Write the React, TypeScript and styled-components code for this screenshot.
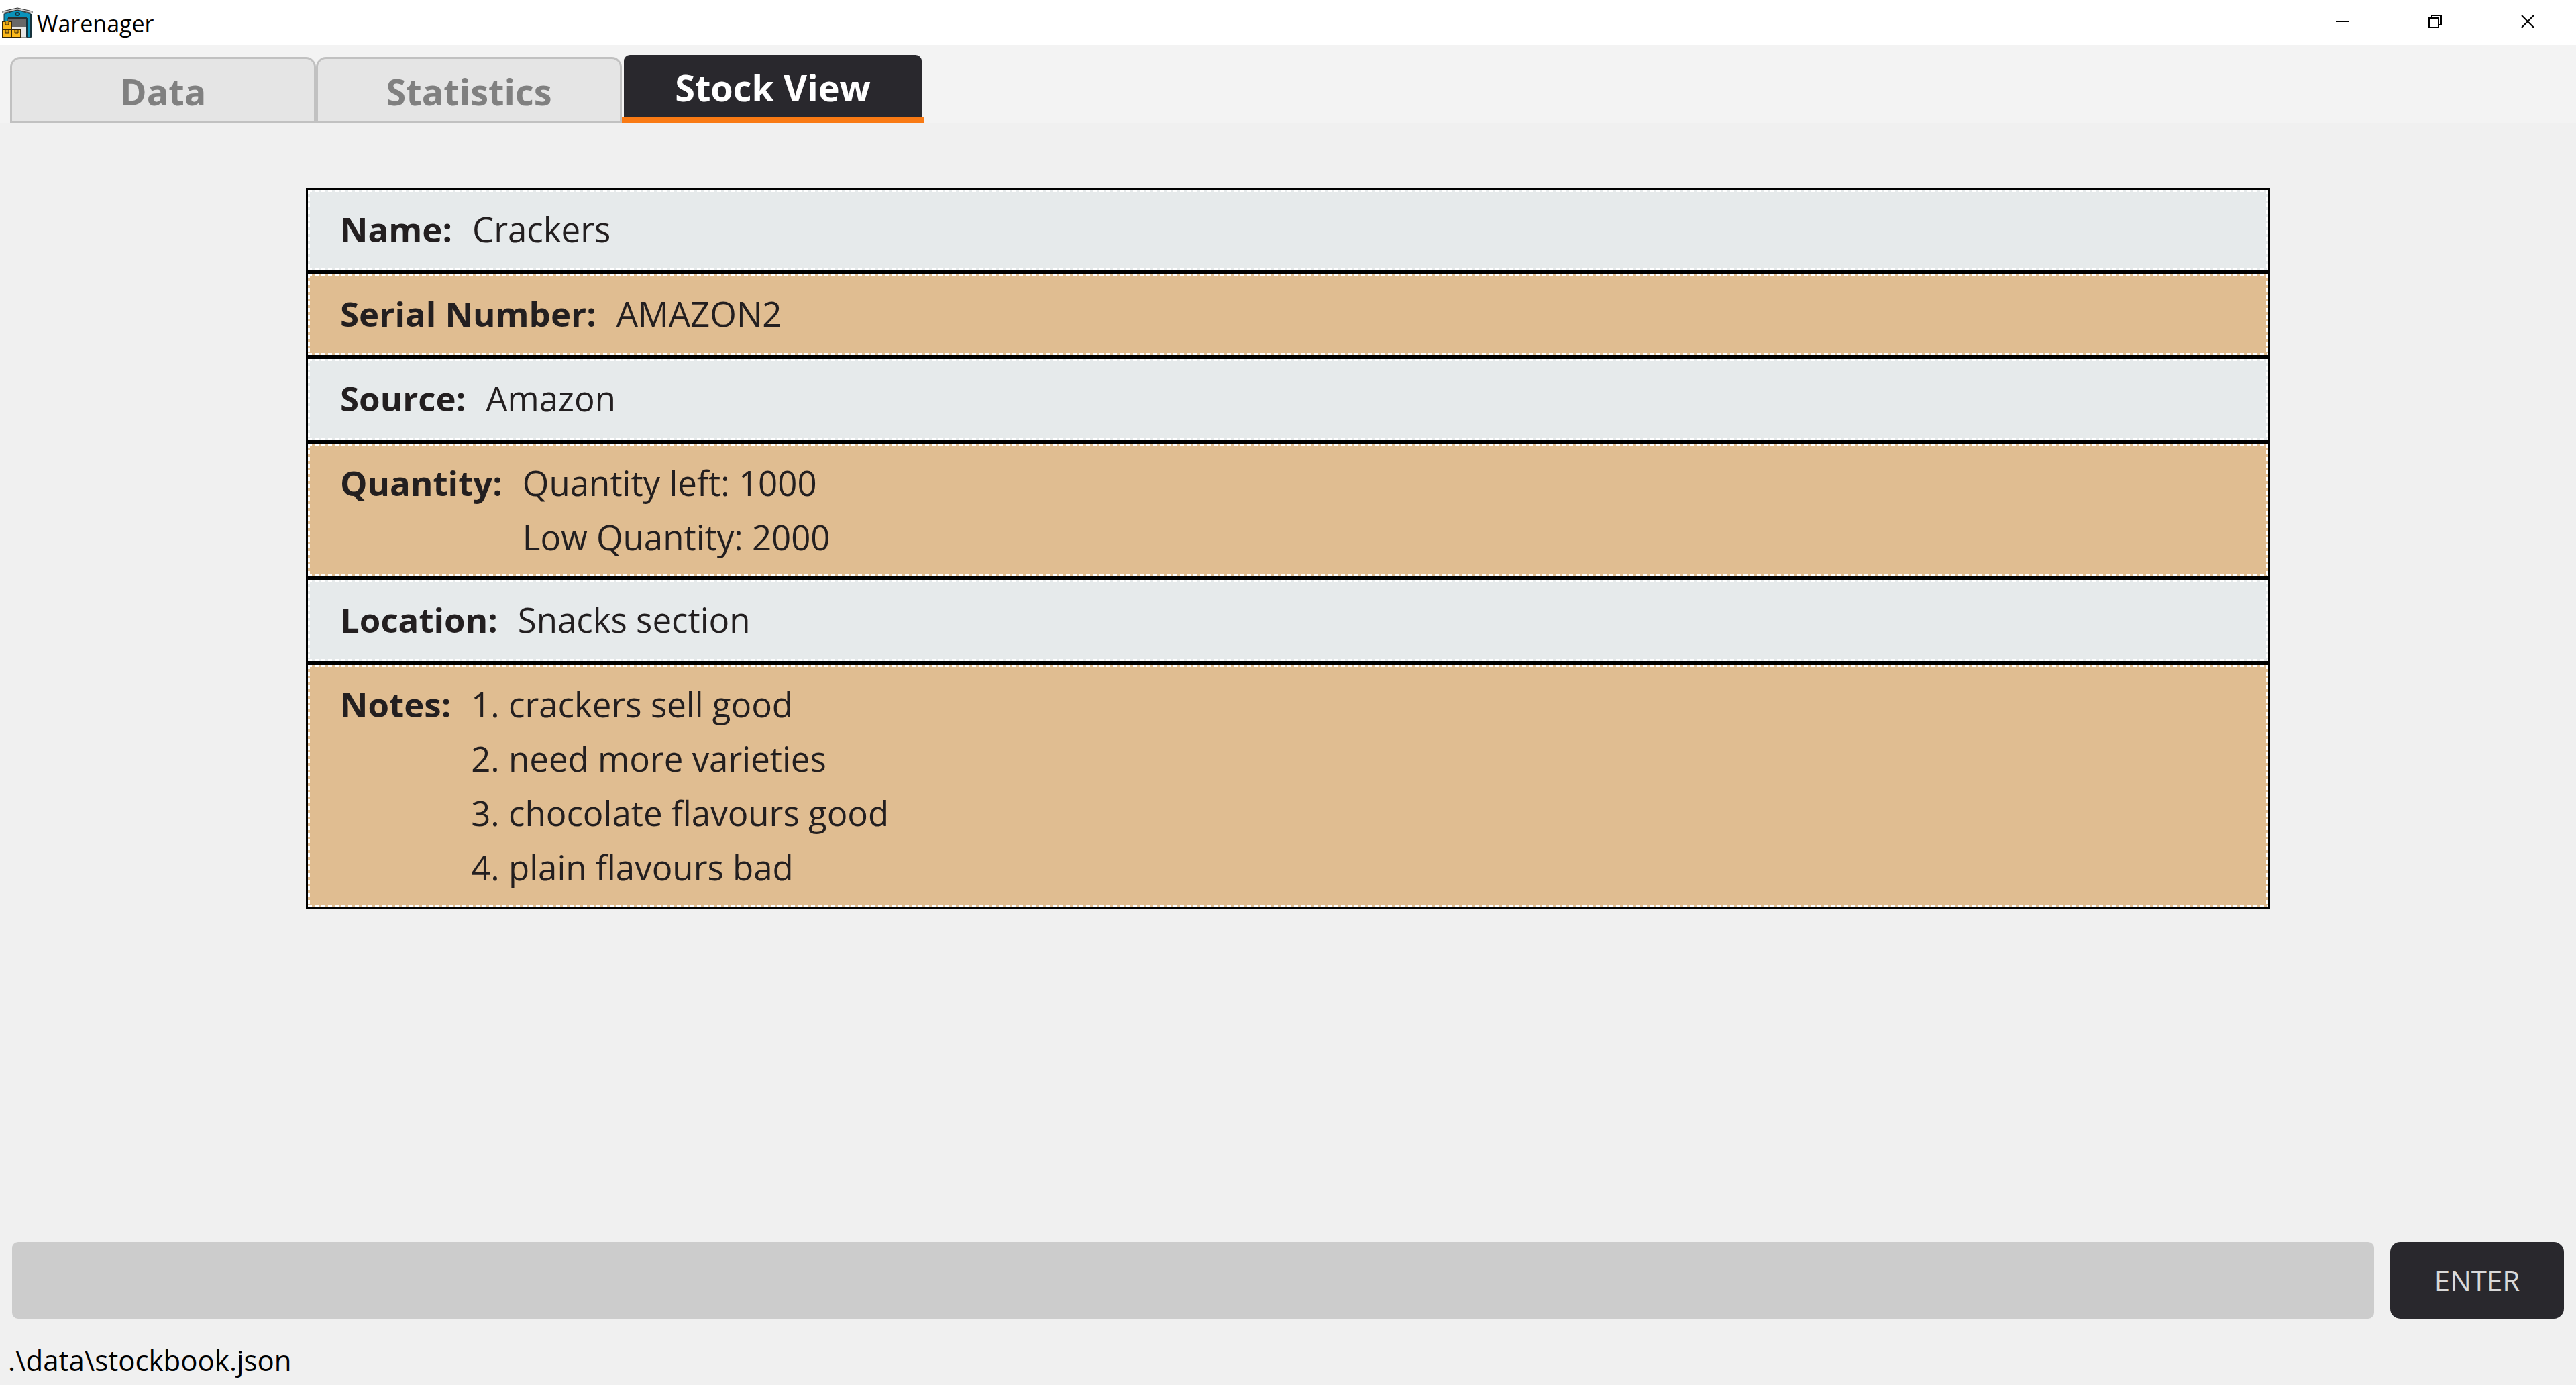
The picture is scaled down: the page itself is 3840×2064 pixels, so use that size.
import { useState, type FormEvent } from "react";
import styled, { createGlobalStyle } from "styled-components";

const colors = {
  title: "#ffffff",
  header: "#f3f3f3",
  page: "#f0f0f0",
  dark: "#29282d",
  accent: "#f97a14",
  tab: "#e5e5e5",
  tabBorder: "#c1c1c1",
  tabText: "#808080",
  pale: "#e6eaeb",
  tan: "#e0bd91",
  text: "#231f20",
  field: "#cccccc",
};

const GlobalStyle = createGlobalStyle`
  *, *::before, *::after { box-sizing: border-box; }
  body {
    margin: 0;
    background: ${colors.page};
    font-family: "Segoe UI", "Open Sans", "Noto Sans", sans-serif;
  }
`;

const Window = styled.div`
  display: flex;
  flex-direction: column;
  min-height: 100vh;
`;

const TitleBar = styled.header`
  display: flex;
  align-items: center;
  height: 67px;
  padding-right: 3px;
  background: ${colors.title};
`;

const AppIcon = styled.svg`
  width: 46px;
  height: 46px;
  margin: 0 6px 0 3px;
`;

const AppTitle = styled.h1`
  flex: 1;
  margin: 0;
  padding-top: 3px;
  font-size: 34px;
  line-height: 48px;
  font-weight: 400;
  color: #000;
`;

const WindowButton = styled.button`
  display: flex;
  align-self: flex-start;
  align-items: center;
  justify-content: center;
  width: 138px;
  height: 64px;
  padding: 0;
  border: 0;
  background: none;

  svg {
    width: 20px;
    height: 20px;
    fill: none;
    stroke: #000;
    stroke-width: 2;
  }
`;

const TabBar = styled.nav`
  display: flex;
  align-items: flex-end;
  height: 117px;
  padding-left: 15px;
  background: ${colors.header};
`;

const Tab = styled.button<{ $active: boolean }>`
  position: relative;
  width: ${(p) => (p.$active ? 444 : 456)}px;
  height: ${(p) => (p.$active ? 102 : 99)}px;
  margin: ${(p) => (p.$active ? "0 3px" : "0")};
  padding: ${(p) => (p.$active ? "0 0 6px" : "3px 0 0")};
  border: ${(p) => (p.$active ? "0" : `3px solid ${colors.tabBorder}`)};
  border-radius: ${(p) => (p.$active ? "9px 9px 0 0" : "15px 15px 0 0")};
  background: ${(p) => (p.$active ? colors.dark : colors.tab)};
  color: ${(p) => (p.$active ? "#ffffff" : colors.tabText)};
  font-family: inherit;
  font-size: 54px;
  line-height: 72px;
  font-weight: 700;

  &::after {
    content: "";
    display: ${(p) => (p.$active ? "block" : "none")};
    position: absolute;
    left: -3px;
    right: -3px;
    bottom: 0;
    height: 9px;
    background: ${colors.accent};
  }
`;

const Content = styled.main`
  flex: 1;
  padding: 96px 456px;
`;

const Details = styled.dl`
  margin: 0;
`;

const Row = styled.div`
  border: 3px solid #000;

  &:nth-child(odd) { background: ${colors.pale}; }
  &:nth-child(even) { background: ${colors.tan}; }
`;

const dashes = (angle: string) =>
  `repeating-linear-gradient(${angle}, #fff 0 6px, transparent 6px 10px)`;

/* The white dashes run along all four edges, 6px on and 4px off. */
const RowInner = styled.div`
  display: flex;
  gap: 30px;
  min-height: 120px;
  padding: 18px 48px;
  background:
    ${dashes("90deg")} top / 100% 3px no-repeat,
    ${dashes("90deg")} bottom / 100% 3px no-repeat,
    ${dashes("180deg")} left / 3px 100% no-repeat,
    ${dashes("180deg")} right / 3px 100% no-repeat;
  color: ${colors.text};
  font-size: 51px;
  line-height: 81px;
`;

const Label = styled.dt`
  font-weight: 700;
`;

const Value = styled.dd`
  margin: 0;
  white-space: pre-line;
`;

const CommandForm = styled.form`
  display: flex;
  gap: 24px;
  padding: 0 18px;
`;

const CommandInput = styled.input`
  flex: 1;
  min-width: 0;
  height: 114px;
  padding: 0 30px;
  border: 0;
  border-radius: 9px;
  outline: none;
  background: ${colors.field};
  color: ${colors.text};
  font-family: inherit;
  font-size: 42px;
`;

const EnterButton = styled.button`
  width: 259px;
  height: 114px;
  padding: 0;
  border: 0;
  border-radius: 15px;
  background: ${colors.dark};
  color: #d9d9d9;
  font-family: inherit;
  font-size: 42px;
  line-height: 60px;
`;

const StatusBar = styled.footer`
  padding: 32px 12px 7px;
  color: #000;
  font-size: 42px;
  line-height: 60px;
`;

const tabs = ["Data", "Statistics", "Stock View"];

const stock = [
  { label: "Name:", value: "Crackers" },
  { label: "Serial Number:", value: "AMAZON2" },
  { label: "Source:", value: "Amazon" },
  { label: "Quantity:", value: "Quantity left: 1000\nLow Quantity: 2000" },
  { label: "Location:", value: "Snacks section" },
  {
    label: "Notes:",
    value:
      "1. crackers sell good\n2. need more varieties\n3. chocolate flavours good\n4. plain flavours bad",
  },
];

function WarehouseIcon() {
  return (
    <AppIcon viewBox="0 0 46 46" aria-hidden="true">
      <path d="M3 10 23 4l20 6v35h-6V16H9v10H3z" fill="#0b93ba" stroke="#1d3038" strokeWidth="1" />
      <path d="M9 15h28v20H9z" fill="#686868" />
      <path d="M9 15h28v3H9z" fill="#2d2d2d" />
      <path d="M15 29h22v15H15z" fill="#e6e6e6" />
      <path d="M37 16v28M43 10v34" stroke="#16323c" strokeWidth="2" />
      <path d="M1 9V6L23 1l22 5v3L23 4z" fill="#c9c9c9" stroke="#2b2b2b" strokeWidth="1" />
      <ellipse cx="23" cy="10" rx="3" ry="2" fill="#0b93ba" stroke="#16323c" strokeWidth="2" />
      <path d="M1 21h13v12H1zM1 33h13v12H1zM14 33h14v12H14z" fill="#fbb81b" stroke="#33260a" strokeWidth="2" />
      <path d="M5 21v5h5v-5M5 33v5h5v-5M19 33v5h5v-5" fill="#d99a10" stroke="#33260a" strokeWidth="1" />
      <path d="M28 45h17" stroke="#2b2b2b" strokeWidth="1" />
    </AppIcon>
  );
}

export default function App() {
  const [active, setActive] = useState("Stock View");
  const [command, setCommand] = useState("");

  const submit = (event: FormEvent) => {
    event.preventDefault();
    setCommand("");
  };

  return (
    <Window>
      <GlobalStyle />
      <TitleBar>
        <WarehouseIcon />
        <AppTitle>Warenager</AppTitle>
        <WindowButton type="button" aria-label="Minimize">
          <svg viewBox="0 0 20 20"><path d="M0 10h20" /></svg>
        </WindowButton>
        <WindowButton type="button" aria-label="Restore">
          <svg viewBox="0 0 20 20"><path d="M1 5h14v14H1zM5 5V1h14v14h-4" /></svg>
        </WindowButton>
        <WindowButton type="button" aria-label="Close">
          <svg viewBox="0 0 20 20"><path d="M1 1l18 18M19 1 1 19" /></svg>
        </WindowButton>
      </TitleBar>
      <TabBar>
        {tabs.map((tab) => (
          <Tab key={tab} type="button" $active={tab === active} onClick={() => setActive(tab)}>
            {tab}
          </Tab>
        ))}
      </TabBar>
      <Content>
        <Details>
          {stock.map(({ label, value }) => (
            <Row key={label}>
              <RowInner>
                <Label>{label}</Label>
                <Value>{value}</Value>
              </RowInner>
            </Row>
          ))}
        </Details>
      </Content>
      <CommandForm onSubmit={submit}>
        <CommandInput
          aria-label="Command"
          value={command}
          onChange={(event) => setCommand(event.target.value)}
        />
        <EnterButton type="submit">ENTER</EnterButton>
      </CommandForm>
      <StatusBar>.\data\stockbook.json</StatusBar>
    </Window>
  );
}
